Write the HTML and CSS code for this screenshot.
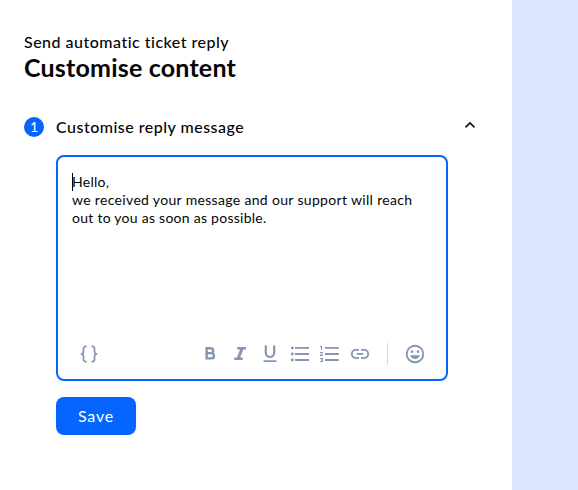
FILE: index.html
```
<!DOCTYPE html>
<html lang="en">
<head>
  <title>Send automatic ticket reply</title>
  <meta charset="UTF-8">
  <link rel="stylesheet" href="styles.css">
</head>
<body>
  <main class="panel">
    <div class="subtitle">Send automatic ticket reply</div>
    <h1>Customise content</h1>

    <div class="step-header">
      <span class="step-number">1</span>
      <span class="step-title">Customise reply message</span>
      <svg class="chevron" width="12" height="8" viewBox="0 0 12 8"><path d="M1.500 6.300 6 2l4.500 4.300"/></svg>
    </div>

    <div class="step-body">
      <div class="editor">
        <div class="message">
          <span class="caret"></span>
          <div>Hello,</div>
          <div class="wide">we received your message and our support will reach</div>
          <div>out to you as soon as possible.</div>
        </div>

        <div class="toolbar">
          <svg class="icon" viewBox="0 0 24 24"><path class="stroke" d="M9.600 4.400H8.700a2.200 2.200 0 0 0-2.200 2.200v2.800C6.500 11 5.500 12 3.800 12c1.700 0 2.700 1 2.700 2.600v2.800a2.200 2.200 0 0 0 2.200 2.200h.9M14.400 4.400h.9a2.200 2.200 0 0 1 2.200 2.200v2.800c0 1.600 1 2.600 2.700 2.600-1.700 0-2.700 1-2.700 2.600v2.800a2.200 2.200 0 0 1-2.200 2.200h-.9"/></svg>

          <div class="format-tools">
            <svg class="icon" viewBox="0 0 24 24"><path class="bold" d="M8.600 6.200h4.100a2.400 2.400 0 0 1 0 4.900H8.600zM8.600 11.100h4.700a2.650 2.650 0 0 1 0 5.300H8.600z"/></svg>
            <svg class="icon" viewBox="0 0 24 24"><path d="M9.300 5h8.700v2.600h-2.700l-3.200 7.800h2.500V18H6.200v-2.600h2.700l3.200-7.800H9.300z"/></svg>
            <svg class="icon" viewBox="0 0 24 24"><path d="M12 16a5.300 5.300 0 0 0 5.300-5.300V3.600h-2.200v7.200a3.100 3.100 0 0 1-6.200 0V3.600H6.700v7.100A5.300 5.300 0 0 0 12 16zM5.600 18.300v1.800h12.800v-1.800z"/></svg>
            <svg class="icon" viewBox="0 0 24 24"><path d="M7 4.900h14v1.900H7zM7 11h14v2H7zM7 17.100h14V19H7z"/><circle cx="4.300" cy="5.900" r="1.450"/><circle cx="4.300" cy="12" r="1.450"/><circle cx="4.300" cy="18" r="1.450"/></svg>
            <svg class="icon" viewBox="0 0 24 24"><path d="M2 17h2v.5H3v1h1v.5H2v1h3v-4H2zM3 8h1V4H2v1h1zM2 11h1.800L2 13.100v.9h3v-1H3.200L5 10.900V10H2zM7 4.900v1.900h13.800V4.900zM7 19h13.800v-1.900H7zM7 13h13.800v-2H7z"/></svg>
            <svg class="icon" viewBox="0 0 24 24"><path class="link" d="M11 7.900H7.800a4 4 0 0 0 0 8H11M13 7.900h3.200a4 4 0 0 1 0 8H13M8.600 11.900h6.800"/></svg>
          </div>

          <span class="divider"></span>
          <svg class="icon" viewBox="0 0 24 24"><circle class="face" cx="12" cy="12" r="8.300"/><circle cx="9" cy="9.700" r="1.350"/><circle cx="15" cy="9.700" r="1.350"/><path d="M7.100 13.200h9.800a5.100 5.100 0 0 1-9.800 0z"/></svg>
        </div>
      </div>

      <button class="save-btn">Save</button>
    </div>
  </main>
</body>
</html>
```
FILE: styles.css
```
body {
  margin: 0;
  background-color: #dce8ff;
  color: #050505;
  font-family: Lato, 'Liberation Sans', sans-serif;
}

.panel {
  box-sizing: border-box;
  width: 512px;
  height: 490px;
  padding: 31px 24px 0;
  background-color: #fff;
}

.subtitle {
  font-size: 16px;
  font-weight: 500;
  line-height: 22px;
  letter-spacing: 0.49px;
  white-space: nowrap;
}

h1 {
  margin: 0;
  font-size: 25px;
  font-weight: 700;
  line-height: 28px;
  letter-spacing: 0.2px;
  white-space: nowrap;
}

.step-header {
  display: flex;
  align-items: center;
  height: 26px;
  margin-top: 33px;
  padding-right: 12px;
}

.step-number {
  width: 20px;
  height: 20px;
  margin-right: 12px;
  border-radius: 50%;
  background-color: #0566ff;
  color: #fff;
  font-size: 14px;
  line-height: 20px;
  text-align: center;
}

.step-title {
  font-size: 16px;
  font-weight: 500;
  line-height: 22px;
  letter-spacing: 0.49px;
  white-space: nowrap;
}

.chevron {
  margin-left: auto;
  margin-bottom: 5px;
  fill: none;
  stroke: #111;
  stroke-width: 1.7;
}

.step-body {
  margin: 15px 40px 0 32px;
}

.editor {
  box-sizing: border-box;
  display: flex;
  flex-direction: column;
  height: 226px;
  border: 2px solid #0566ff;
  border-radius: 8px;
}

.message {
  position: relative;
  flex: 1;
  padding: 16px 14px 0;
  font-size: 14px;
  line-height: 18px;
  letter-spacing: 0.26px;
  white-space: nowrap;
}

.message .wide {
  letter-spacing: 0.33px;
}

.caret {
  position: absolute;
  top: 16px;
  left: 14px;
  width: 1px;
  height: 18px;
  background-color: #000;
}

.toolbar {
  display: flex;
  align-items: center;
  height: 24px;
  padding: 0 19px 13px;
}

.icon {
  width: 24px;
  height: 24px;
  fill: #8595b3;
}

.icon .stroke,
.icon .bold,
.icon .link,
.icon .face {
  fill: none;
  stroke: #8595b3;
  stroke-width: 1.7;
}

.icon .bold {
  stroke-width: 2.4;
}

.icon .link,
.icon .face {
  stroke-width: 1.9;
}

.format-tools {
  display: flex;
  gap: 6px;
  margin-left: auto;
}

.divider {
  width: 1px;
  height: 22px;
  margin: 0 15px;
  background-color: #d9d9d9;
}

.save-btn {
  display: block;
  width: 80px;
  height: 38px;
  margin-top: 16px;
  padding: 0 0 2px;
  border: none;
  border-radius: 8px;
  background-color: #0566ff;
  color: #fff;
  font-family: inherit;
  font-size: 16px;
  letter-spacing: 0.8px;
}
```
